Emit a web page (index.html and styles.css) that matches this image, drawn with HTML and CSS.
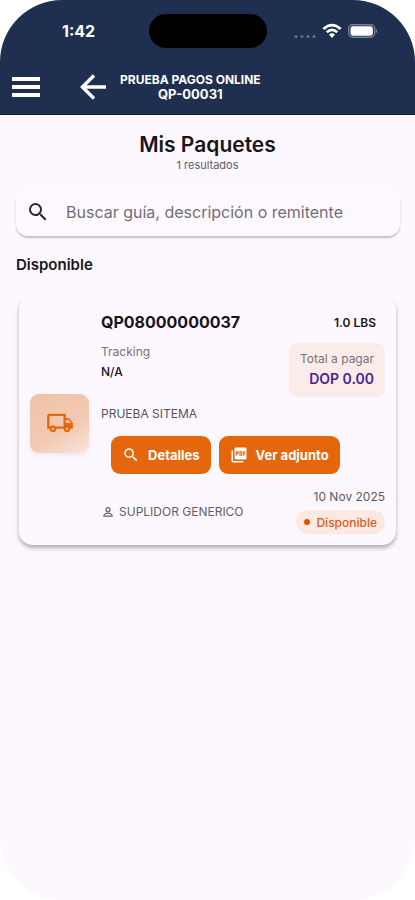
FILE: index.html
```html
<!DOCTYPE html>
<html lang="es">
<head>
<meta charset="utf-8">
<meta name="viewport" content="width=device-width, initial-scale=1">
<title>Mis Paquetes</title>
<link rel="stylesheet" href="styles.css">
</head>
<body>
<div class="screen">
  <header class="header">
    <div class="status">
      <span class="time">1:42</span>
      <span class="island"></span>
      <div class="indicators">
        <svg width="22" height="5" viewBox="0 0 22 5" fill="#64708a" aria-hidden="true"><circle cx="2" cy="2.5" r="1.6"/><circle cx="8" cy="2.5" r="1.6"/><circle cx="14" cy="2.5" r="1.6"/><circle cx="20" cy="2.5" r="1.6"/></svg>
        <svg width="20" height="16" viewBox="0 0 20 16" fill="none" stroke="#fff" stroke-width="2.7" aria-hidden="true"><path d="M1.4 5.9Q10-1.8 18.6 5.9"/><path d="M4.700 9.300Q10 4.500 15.300 9.300"/><path d="M10 15l-3-3.400q3-2.500 6 0z" fill="#fff" stroke="none"/></svg>
        <svg width="30" height="14" viewBox="0 0 30 14" aria-hidden="true"><rect x=".7" y=".7" width="26" height="12.600" rx="4" fill="none" stroke="#77829a" stroke-width="1.400"/><rect x="2.500" y="2.300" width="22.400" height="9.400" rx="2.600" fill="#fff"/><path d="M28 4.700q2 2.300 0 4.600z" fill="#8d97aa"/></svg>
      </div>
    </div>
    <div class="appbar">
      <button class="icon-button" aria-label="Menú"><svg width="28" height="20" viewBox="0 0 28 20" fill="#fff"><path d="M0 0h28v4H0zM0 8h28v4H0zM0 16h28v4H0z"/></svg></button>
      <button class="icon-button" aria-label="Atrás"><svg width="26" height="26" viewBox="0 0 26 26" fill="none" stroke="#fff" stroke-width="3.400"><path d="M14 1.500L2.400 13 14 24.500M2.500 13H26"/></svg></button>
      <div class="account"><span class="account-name">PRUEBA PAGOS ONLINE</span><span class="account-code">QP-00031</span></div>
    </div>
  </header>
  <main class="main">
    <h1 class="title">Mis Paquetes</h1>
    <p class="count">1 resultados</p>
    <label class="search">
      <svg width="24" height="24" viewBox="0 0 24 24" fill="#29243a" aria-hidden="true"><path d="M15.500 14h-.79l-.28-.27A6.470 6.470 0 0 0 16 9.500 6.500 6.500 0 1 0 9.500 16c1.610 0 3.090-.59 4.230-1.570l.27.28v.79l5 4.990L20.490 19l-4.990-5zm-6 0C7.010 14 5 11.990 5 9.500S7.010 5 9.500 5 14 7.010 14 9.500 11.990 14 9.500 14z"/></svg>
      <input class="search-input" type="search" aria-label="Buscar" placeholder="Buscar guía, descripción o remitente">
    </label>
    <h2 class="section">Disponible</h2>
    <article class="card">
      <div class="thumb">
        <svg width="28" height="28" viewBox="0 0 24 24" fill="#e6660c" aria-hidden="true"><path d="M20 8h-3V4H3c-1.100 0-2 .9-2 2v11h2c0 1.660 1.340 3 3 3s3-1.340 3-3h6c0 1.660 1.340 3 3 3s3-1.340 3-3h2v-5l-3-4zm-.5 1.500l1.960 2.500H17V9.500zM6 18c-.55 0-1-.45-1-1s.45-1 1-1 1 .45 1 1-.45 1-1 1zm2.220-3c-.55-.61-1.330-1-2.220-1s-1.670.39-2.220 1H3V6h12v9H8.220zM18 18c-.55 0-1-.45-1-1s.45-1 1-1 1 .45 1 1-.45 1-1 1z"/></svg>
      </div>
      <div class="details">
        <div class="row heading"><h3 class="code">QP08000000037</h3><span class="weight">1.0 LBS</span></div>
        <div class="row info">
          <div class="tracking"><span class="label">Tracking</span><span class="value">N/A</span></div>
          <div class="total"><span class="label">Total a pagar</span><span class="amount">DOP 0.00</span></div>
        </div>
        <p class="description">PRUEBA SITEMA</p>
        <div class="actions">
          <button class="action"><svg width="18" height="18" viewBox="0 0 24 24" fill="#fff" aria-hidden="true"><path d="M15.500 14h-.79l-.28-.27A6.470 6.470 0 0 0 16 9.500 6.500 6.500 0 1 0 9.500 16c1.610 0 3.090-.59 4.230-1.570l.27.28v.79l5 4.990L20.490 19l-4.990-5zm-6 0C7.010 14 5 11.990 5 9.500S7.010 5 9.500 5 14 7.010 14 9.500 11.990 14 9.500 14z"/></svg>Detalles</button>
          <button class="action"><svg width="18" height="18" viewBox="0 0 24 24" fill="#fff" aria-hidden="true"><path d="M20 2H8c-1.100 0-2 .9-2 2v12c0 1.100.9 2 2 2h12c1.100 0 2-.9 2-2V4c0-1.100-.9-2-2-2zm-8.500 7.500c0 .83-.67 1.500-1.500 1.500H9v2H7.500V7H10c.83 0 1.500.67 1.500 1.500v1zm5 2c0 .83-.67 1.500-1.500 1.500h-2.500V7H15c.83 0 1.500.67 1.500 1.500v3zm4-3H19v1h1.500V11H19v2h-1.500V7h3v1.500zM9 9.500h1v-1H9v1zM4 6H2v14c0 1.100.9 2 2 2h14v-2H4V6zm10 5.500h1v-3h-1v3z"/></svg>Ver adjunto</button>
        </div>
        <div class="row footer">
          <div class="supplier"><svg width="14" height="14" viewBox="0 0 24 24" fill="none" stroke="#655f6a" stroke-width="2" aria-hidden="true"><circle cx="12" cy="8" r="3.500"/><path d="M5 19v-1.500c0-2 4.500-3.500 7-3.500s7 1.500 7 3.500V19z"/></svg><span>SUPLIDOR GENERICO</span></div>
          <div class="state"><time class="date" datetime="2025-11-10">10 Nov 2025</time><span class="chip"><span class="dot"></span>Disponible</span></div>
        </div>
      </div>
    </article>
  </main>
</div>
</body>
</html>
```
FILE: styles.css
```css
* { box-sizing: border-box; }
body { margin: 0; background: #fff; font-family: Inter, "Liberation Sans", sans-serif; color: #17141b; }
h1, h2, h3, p { margin: 0; }
svg { display: block; flex: none; }
button { font: inherit; border: 0; cursor: pointer; }

.screen { min-height: 100vh; background: #fdf7ff; border-radius: 62px; overflow: hidden; }

.header { background: #1e2f4f; color: #fff; padding: 14px 12px 12px; border-bottom: 1px solid #101c3a; }
.status { display: grid; grid-template-columns: 1fr 118px 1fr; align-items: center; height: 34px; }
.time { font-size: 16px; font-weight: 700; padding-left: 50px; }
.island { height: 34px; border-radius: 17px; background: #000; }
.indicators { display: flex; align-items: center; gap: 6px; justify-content: flex-end; padding-right: 25px; }
.indicators svg:first-child { margin-top: 10px; }
.appbar { display: flex; align-items: center; height: 30px; margin-top: 24px; }
.icon-button { padding: 0; background: none; margin-right: 40px; }
.icon-button + .icon-button { margin-right: 14px; }
.account { display: flex; flex-direction: column; align-items: center; font-weight: 700; line-height: 15px; }
.account-name { font-size: 12px; }
.account-code { font-size: 13px; }

.main { padding: 18px 16px; }
.title { font-size: 21px; line-height: 24px; font-weight: 600; text-align: center; }
.count { font-size: 11px; line-height: 16px; text-align: center; color: #625d67; }
.search { display: flex; align-items: center; gap: 16px; height: 48px; margin: 15px -1px 0 0; padding: 0 10px; border-radius: 12px; background: #fef9ff; box-shadow: 0 2px 2px #00000038; }
.search-input { flex: 1; min-width: 0; padding: 0; border: 0; outline: 0; background: none; font: 400 16px/20px Inter, sans-serif; color: #17141b; }
.search-input::placeholder { color: #736d78; opacity: 1; }
.section { font-size: 15px; line-height: 20px; font-weight: 600; margin-top: 19px; }

.card { display: flex; align-items: center; gap: 12px; margin: 21px 3px 0; padding: 16px 11px 11px; border-radius: 14px; background: #fdf8ff; box-shadow: 0 3px 4px #0000004d; }
.thumb { display: flex; align-items: center; justify-content: center; flex: none; width: 59px; height: 59px; border-radius: 9px; background: linear-gradient(150deg, #f0c2a7, #f2c9b1 60%, #f9e5dc); box-shadow: 0 3px 5px #33339914; }
.details { flex: 1; min-width: 0; }
.row { display: flex; justify-content: space-between; }
.heading { align-items: center; padding-right: 9px; }
.code { font-size: 16px; line-height: 20px; font-weight: 700; }
.weight { font-size: 12px; font-weight: 600; }
.info { margin-top: 11px; }
.tracking, .total { display: flex; flex-direction: column; }
.label { font-size: 12px; line-height: 17px; color: #77717b; }
.value { font-size: 12px; line-height: 24px; font-weight: 500; }
.total { align-items: flex-end; padding: 7px 11px; border-radius: 8px; background: #fcece9; }
.amount { font-size: 14px; line-height: 23px; font-weight: 600; color: #48239b; }
.description { font-size: 12px; line-height: 16px; margin-top: 9px; color: #57515c; }
.actions { display: flex; gap: 8px; margin: 14px 0 0 10px; }
.action { display: flex; align-items: center; gap: 8px; height: 38px; padding: 0 11px; border-radius: 9px; background: #e6660c; color: #fff; font-size: 13px; font-weight: 700; white-space: nowrap; }
.footer { align-items: center; margin-top: 15px; }
.supplier { display: flex; align-items: center; gap: 4px; font-size: 12px; color: #625c67; }
.state { display: flex; flex-direction: column; align-items: flex-end; gap: 5px; }
.date { font-size: 12px; line-height: 16px; color: #5e5864; }
.chip { display: flex; align-items: center; gap: 6px; height: 24px; padding: 0 8px; border-radius: 12px; background: #fde9e2; color: #e05c1c; font-size: 12px; font-weight: 500; }
.dot { width: 6px; height: 6px; border-radius: 50%; background: #dc520f; }
```
